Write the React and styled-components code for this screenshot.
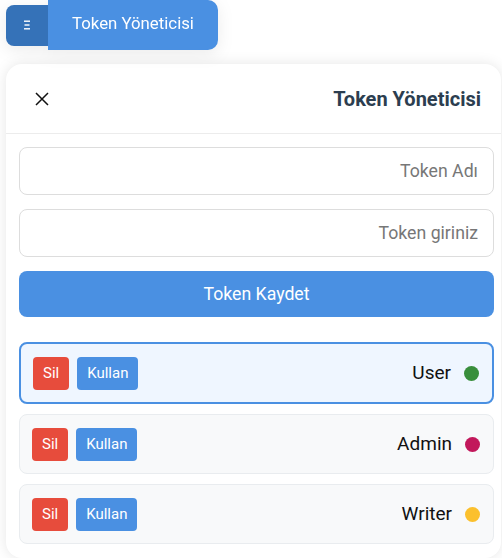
import React, { useState } from "react";
import styled, { createGlobalStyle } from "styled-components";

const GlobalStyle = createGlobalStyle`
  html, body {
    margin: 0;
    padding: 0;
    background: #ffffff;
    font-family: Roboto, "Noto Sans", Arial, sans-serif;
  }
  * { box-sizing: border-box; }
`;

const Page = styled.div`
  width: 502px;
  height: 558px;
  overflow: hidden;
  padding: 0 1px 0 6px;
  display: flex;
  flex-direction: column;
`;

const ToggleGroup = styled.div`
  display: flex;
  align-items: center;
  align-self: flex-start;
  filter: drop-shadow(0 4px 8px rgba(0, 0, 0, 0.08));
`;

const MenuButton = styled.button`
  width: 42px;
  height: 41px;
  border: none;
  border-radius: 8px 0 0 8px;
  background: #3572b8;
  display: flex;
  align-items: center;
  justify-content: center;
  padding: 0;
`;

const TitleButton = styled.button`
  width: 170px;
  height: 50px;
  border: none;
  border-radius: 0 10px 10px 0;
  background: #4a90e2;
  color: #ffffff;
  font-family: inherit;
  font-size: 16.8px;
  padding: 0 0 4px;
`;

const Panel = styled.div`
  margin-top: 14px;
  flex: 1;
  background: #ffffff;
  border-radius: 16px;
  box-shadow: 0 0 14px rgba(0, 0, 0, 0.1);
  display: flex;
  flex-direction: column;
`;

const Header = styled.div`
  height: 70px;
  display: flex;
  align-items: center;
  justify-content: space-between;
  padding: 0 20px 0 28px;
  border-bottom: 1px solid #ececec;
`;

const CloseButton = styled.button`
  border: none;
  background: none;
  padding: 0;
  display: flex;
  width: 16px;
  height: 16px;
`;

const Title = styled.h2`
  margin: 0;
  font-size: 20px;
  font-weight: 700;
  color: #2c3e50;
`;

const Body = styled.div`
  padding: 13px 7px 0 13px;
  display: flex;
  flex-direction: column;
`;

const Input = styled.input`
  height: 48px;
  width: 100%;
  border: 1px solid #dddddd;
  border-radius: 8px;
  padding: 0 15px;
  margin-bottom: 14px;
  text-align: right;
  font-family: inherit;
  font-size: 17.7px;
  color: #333;
  &::placeholder { color: #777777; }
`;

const SaveButton = styled.button`
  height: 46px;
  border: none;
  border-radius: 8px;
  background: #4a90e2;
  color: #ffffff;
  font-family: inherit;
  font-size: 17.7px;
  margin-bottom: 25px;
`;

const List = styled.div`
  display: flex;
  flex-direction: column;
  gap: 10px;
`;

const Item = styled.div`
  height: ${({ $active }) => ($active ? "62px" : "60px")};
  display: flex;
  align-items: center;
  padding: 0 13px 0 12px;
  border-radius: 8px;
  border: ${({ $active }) => ($active ? "2px solid #4a90e2" : "1px solid #e9ecef")};
  background: ${({ $active }) => ($active ? "#eff6ff" : "#f8f9fa")};
`;

const SmallButton = styled.button`
  height: 33px;
  border: none;
  border-radius: 4px;
  padding: 0 10px;
  margin-right: 8px;
  background: ${({ $danger }) => ($danger ? "#e74c3c" : "#4a90e2")};
  color: #ffffff;
  font-family: inherit;
  font-size: 15px;
`;

const Name = styled.span`
  margin-left: auto;
  font-size: 19px;
  color: #111111;
  padding-bottom: 2px;
`;

const Dot = styled.span`
  width: 15px;
  height: 15px;
  border-radius: 50%;
  margin-left: 13px;
  background: ${({ $color }) => $color};
`;

const tokens = [
  { name: "User", color: "#388e3c" },
  { name: "Admin", color: "#c2185b" },
  { name: "Writer", color: "#fbc02d" },
];

export default function App() {
  const [active] = useState(0);
  return (
    <>
      <GlobalStyle />
      <Page>
        <ToggleGroup>
          <MenuButton>
            <svg width="8" height="10" viewBox="0 0 8 10">
              <rect x="1" y="0.5" width="6" height="1.4" fill="#fff" />
              <rect x="1.5" y="4.3" width="5" height="1.4" fill="#fff" />
              <rect x="1" y="8.1" width="6" height="1.4" fill="#fff" />
            </svg>
          </MenuButton>
          <TitleButton>Token Yöneticisi</TitleButton>
        </ToggleGroup>
        <Panel>
          <Header>
            <CloseButton>
              <svg width="16" height="16" viewBox="0 0 16 16">
                <path d="M2 2 L14 14 M14 2 L2 14" stroke="#111" strokeWidth="1.5" />
              </svg>
            </CloseButton>
            <Title>Token Yöneticisi</Title>
          </Header>
          <Body>
            <Input placeholder="Token Adı" />
            <Input placeholder="Token giriniz" />
            <SaveButton>Token Kaydet</SaveButton>
            <List>
              {tokens.map((t, i) => (
                <Item key={t.name} $active={i === active}>
                  <SmallButton $danger>Sil</SmallButton>
                  <SmallButton>Kullan</SmallButton>
                  <Name>{t.name}</Name>
                  <Dot $color={t.color} />
                </Item>
              ))}
            </List>
          </Body>
        </Panel>
      </Page>
    </>
  );
}
